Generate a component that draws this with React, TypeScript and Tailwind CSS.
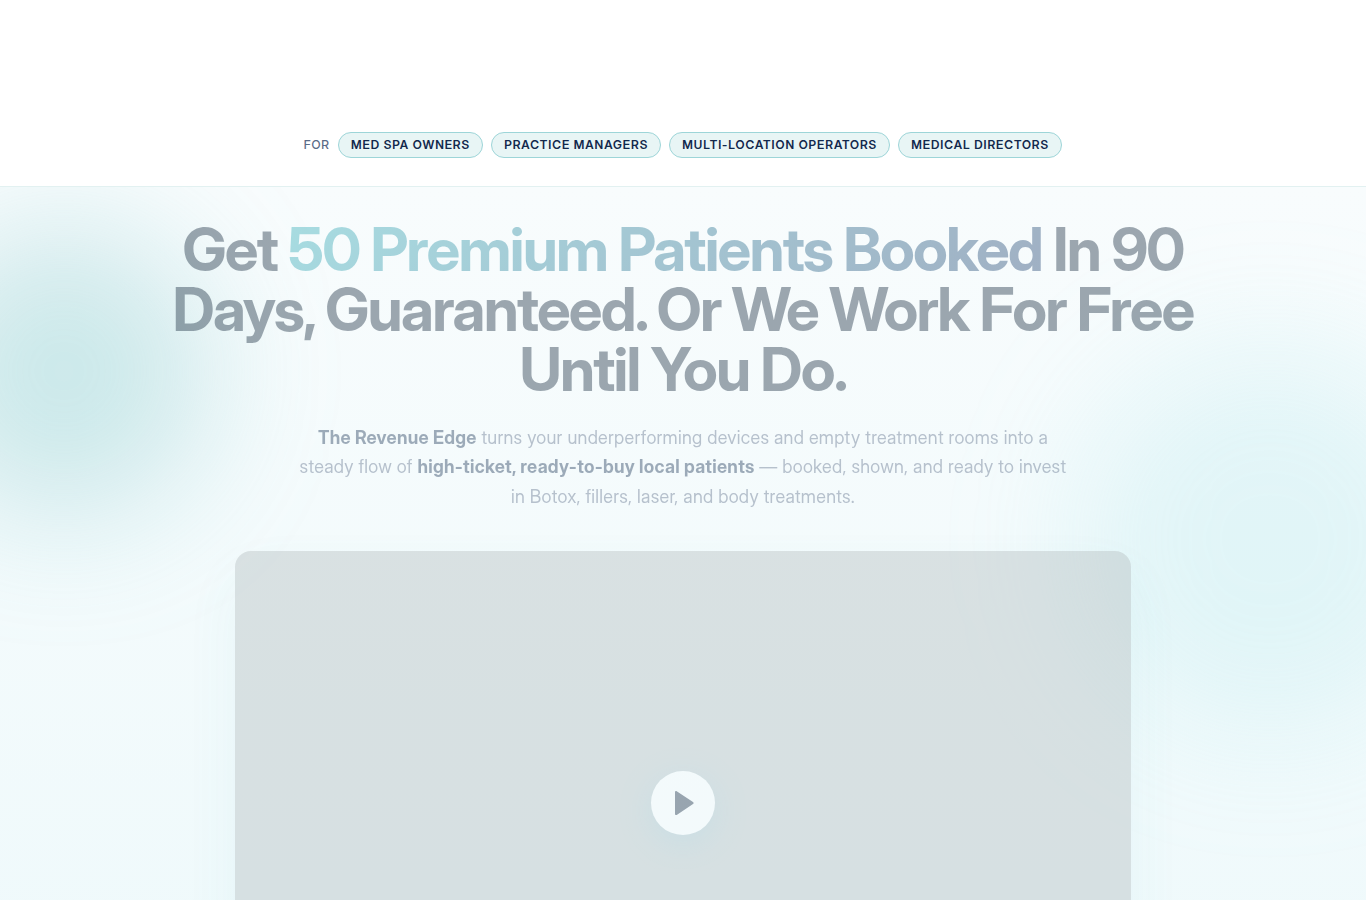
import React from 'react';

const audiences = [
  'Med Spa Owners',
  'Practice Managers',
  'Multi-Location Operators',
  'Medical Directors',
];

const AudienceBar: React.FC = () => (
  <header className="border-b border-[#e2f1f1] bg-white px-4 pt-33 pb-7">
    <div className="flex flex-wrap items-center justify-center gap-2 text-xs tracking-[0.08em] uppercase">
      <span className="font-medium text-[#5a6b87]">For</span>
      <ul className="flex flex-wrap items-center justify-center gap-2">
        {audiences.map((name) => (
          <li
            key={name}
            className="rounded-full border border-[#9dd5d8] bg-[#e8f5f5] px-3 py-1 font-semibold text-[#12284c]"
          >
            {name}
          </li>
        ))}
      </ul>
    </div>
  </header>
);

const VideoPlayer: React.FC = () => (
  <div className="mx-auto mt-10 flex aspect-video max-w-4xl items-center justify-center rounded-2xl bg-[#b1bbbd] shadow-[0_25px_60px_rgba(45,175,185,0.15)]">
    <button
      type="button"
      aria-label="Play video"
      className="flex size-16 items-center justify-center rounded-full bg-[#f8fbfd] shadow-[0_8px_32px_rgba(45,175,225,0.25)]"
    >
      <svg viewBox="0 0 64 64" className="size-16 fill-[#142840]" aria-hidden="true">
        <path d="M24 21.2c0-1 .9-1.500 1.700-1l16.300 10.700c.8.500.8 1.600 0 2.100L25.700 43.900c-.8.500-1.700 0-1.700-1z" />
      </svg>
    </button>
  </div>
);

export default function App() {
  return (
    <div className="min-h-screen bg-white font-['Inter_Display','Inter',sans-serif] antialiased">
      <AudienceBar />

      <main className="relative overflow-hidden bg-linear-to-b from-[#f8fcfd] to-[#edf9fb] px-6 pt-8 pb-20">
        {/* Background glows */}
        <div className="absolute top-10 -left-20 size-72 rounded-full bg-[#6bbdc0]/30 blur-3xl" />
        <div className="absolute top-40 -right-24 size-96 rounded-full bg-[#96e0e8]/20 blur-3xl" />

        <div className="relative opacity-40">
          <h1 className="mx-auto max-w-5xl text-center text-6xl leading-none font-bold tracking-[-0.03em] text-[#14283c]">
            Get{' '}
            <span className="bg-linear-135 from-[#32afb9] to-[#1e3f6e] bg-clip-text text-transparent">
              50 Premium Patients Booked
            </span>{' '}
            In 90 Days, Guaranteed. Or We Work For Free Until You Do.
          </h1>

          <p className="mx-auto mt-6 max-w-3xl text-center text-lg leading-relaxed tracking-[0.015em] text-[#5a6b87]">
            <strong className="font-bold text-[#193455]">The Revenue Edge</strong> turns your underperforming
            devices and empty treatment rooms into a steady flow of{' '}
            <strong className="font-bold text-[#193455]">high-ticket, ready-to-buy local patients</strong> —
            booked, shown, and ready to invest in Botox, fillers, laser, and body treatments.
          </p>

          <VideoPlayer />
        </div>
      </main>
    </div>
  );
}
